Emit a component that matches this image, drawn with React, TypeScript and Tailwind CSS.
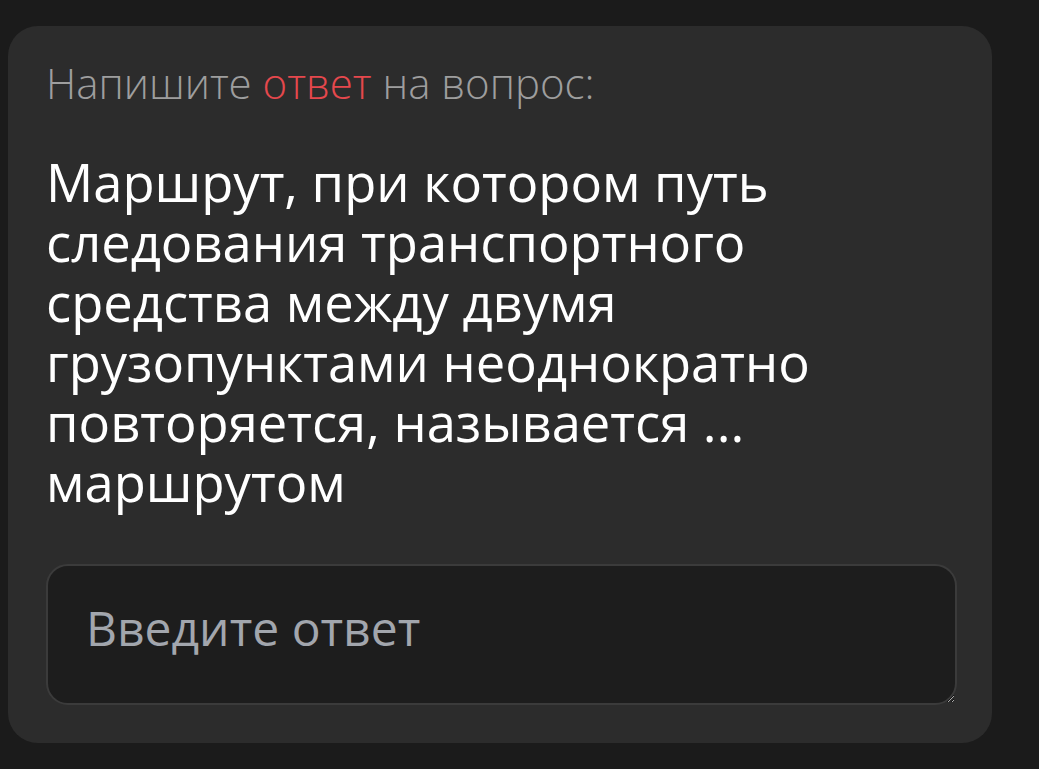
export default function App() {
  return (
    <div className="min-h-[769px] w-full bg-[#1b1b1b] pt-[26px] pl-[8px]" style={{ fontFamily: '"Open Sans", sans-serif' }}>
      <div className="w-[984px] h-[717px] rounded-[30px] bg-[#2c2c2c] px-[38px] pt-[33px]">
        <p className="text-[42px] leading-[48px] font-light text-[#9e9e9e]">
          Напишите <span className="text-[#e5484d]">ответ</span> на вопрос:
        </p>
        <h2 className="mt-[45px] text-[52.5px] leading-[60px] font-normal text-white">
          Маршрут, при котором путь следования транспортного средства между двумя грузопунктами неоднократно повторяется, называется ... маршрутом
        </h2>
        <textarea
          placeholder="Введите ответ"
          className="mt-[52px] block w-[911px] h-[141px] rounded-[22px] border-2 border-[#3b3b3b] bg-[#1d1d1d] px-[38px] pt-[32px] text-[48px] leading-[60px] text-white placeholder:text-[#a2a6ad] outline-none"
        />
      </div>
    </div>
  );
}
